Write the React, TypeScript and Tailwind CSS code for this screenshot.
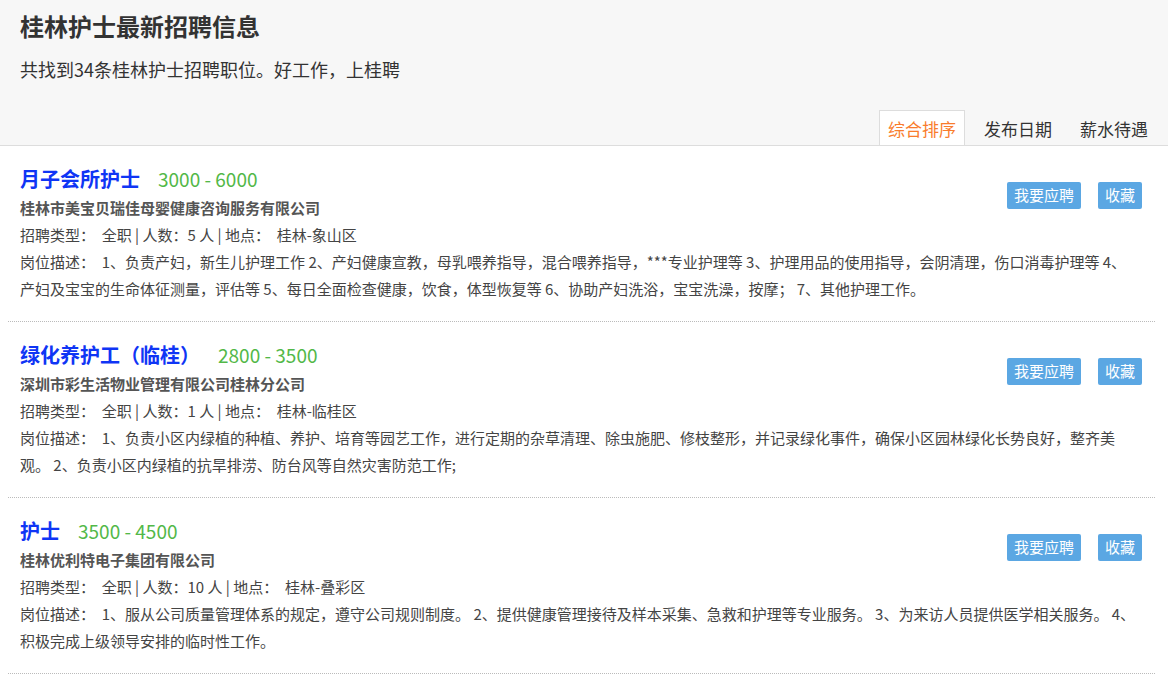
import React from 'react'

const jobs = [
  {
    title: '月子会所护士',
    salary: '3000 - 6000',
    company: '桂林市美宝贝瑞佳母婴健康咨询服务有限公司',
    count: '5',
    place: '桂林-象山区',
    desc: '1、负责产妇，新生儿护理工作 2、产妇健康宣教，母乳喂养指导，混合喂养指导，***专业护理等 3、护理用品的使用指导，会阴清理，伤口消毒护理等 4、产妇及宝宝的生命体征测量，评估等 5、每日全面检查健康，饮食，体型恢复等 6、协助产妇洗浴，宝宝洗澡，按摩； 7、其他护理工作。',
  },
  {
    title: '绿化养护工（临桂）',
    salary: '2800 - 3500',
    company: '深圳市彩生活物业管理有限公司桂林分公司',
    count: '1',
    place: '桂林-临桂区',
    desc: '1、负责小区内绿植的种植、养护、培育等园艺工作，进行定期的杂草清理、除虫施肥、修枝整形，并记录绿化事件，确保小区园林绿化长势良好，整齐美观。 2、负责小区内绿植的抗旱排涝、防台风等自然灾害防范工作;',
  },
  {
    title: '护士',
    salary: '3500 - 4500',
    company: '桂林优利特电子集团有限公司',
    count: '10',
    place: '桂林-叠彩区',
    desc: '1、服从公司质量管理体系的规定，遵守公司规则制度。 2、提供健康管理接待及样本采集、急救和护理等专业服务。 3、为来访人员提供医学相关服务。 4、积极完成上级领导安排的临时性工作。',
  },
]

const tabs = ['综合排序', '发布日期', '薪水待遇']

export default function App() {
  return (
    <div
      className="w-[1168px] min-h-[676px] bg-white text-[#444]"
      style={{ fontFamily: '"Microsoft YaHei", "Noto Sans CJK SC", "Liberation Sans", sans-serif' }}
    >
      <div className="bg-[#f7f7f7] border-b border-[#ddd] pt-[9px] px-5">
        <h1 className="text-[24px] leading-[34px] font-bold text-[#333]">桂林护士最新招聘信息</h1>
        <p className="mt-[13px] text-[18px] leading-[26px] text-[#333]">共找到34条桂林护士招聘职位。好工作，上桂聘</p>
        <div className="mt-[28px] flex justify-end gap-[10px] -mr-[9px]">
          {tabs.map((t, i) => (
            <div
              key={t}
              className={
                i === 0
                  ? 'px-2 h-[35px] leading-[35px] text-[17px] text-[#f97c2c] bg-white border border-b-0 border-[#ddd] -mb-px'
                  : 'px-2 h-[35px] leading-[35px] text-[17px] text-[#333] border border-transparent'
              }
            >
              {t}
            </div>
          ))}
        </div>
      </div>

      <div className="mx-2 w-[1147px]">
        {jobs.map((job) => (
          <div key={job.title} className="border-b border-dotted border-[#bbb] pl-3 pr-[15px] pt-[18px] pb-[19px]">
            <div className="flex justify-between">
              <div>
                <div className="flex items-baseline h-[30px] leading-[30px]">
                  <span className="text-[20px] font-bold text-[#0f35f5]">{job.title}</span>
                  <span className="ml-[18px] text-[19px] text-[#52b848]">{job.salary}</span>
                </div>
                <p className="text-[15px] leading-[27px] font-bold text-[#555]">{job.company}</p>
              </div>
              <div className="flex gap-[17px] pt-[18px] -mr-[2px]">
                <button className="h-[27px] px-[7px] rounded-[2px] bg-[#5ba7e3] text-white text-[15px]">我要应聘</button>
                <button className="h-[27px] px-[7px] rounded-[2px] bg-[#5ba7e3] text-white text-[15px]">收藏</button>
              </div>
            </div>
            <p className="text-[15px] leading-[27px]">
              {`招聘类型：\u00a0 全职 | 人数：${job.count} 人 | 地点：\u00a0 ${job.place}`}
            </p>
            <p className="text-[15px] leading-[27px]">{`岗位描述：\u00a0 ${job.desc}`}</p>
          </div>
        ))}
      </div>
    </div>
  )
}
